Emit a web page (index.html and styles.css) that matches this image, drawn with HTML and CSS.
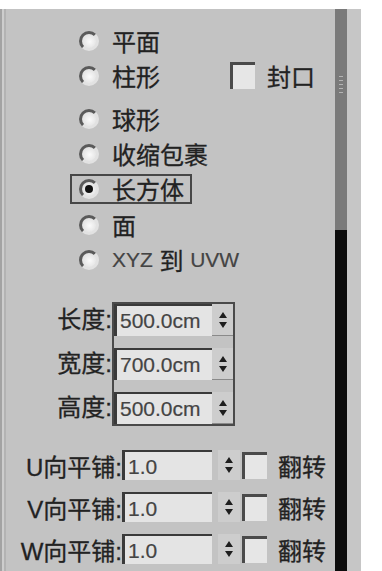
FILE: index.html
```html
<!DOCTYPE html>
<html lang="zh-CN">
<head>
    <meta charset="UTF-8">
    <title>UVW贴图参数</title>
    <link rel="stylesheet" href="styles.css">
</head>
<body>
<div class="panel">
    <div class="content">
        <!--mapping type-->
        <ul class="options">
            <li class="opt"><span class="radio"></span>平面</li>
            <li class="opt"><span class="radio"></span>柱形<span class="cap"><span class="check"></span>封口</span></li>
            <li class="opt gap_lg"><span class="radio"></span>球形</li>
            <li class="opt"><span class="radio"></span>收缩包裹</li>
            <li class="opt"><span class="picked"><span class="radio on"></span>长方体</span></li>
            <li class="opt gap_sm"><span class="radio"></span>面</li>
            <li class="opt"><span class="radio"></span><span class="latin">XYZ</span>&nbsp;到&nbsp;<span class="latin">UVW</span></li>
        </ul>
        <!--size-->
        <div class="dims">
            <div class="dim_labels">
                <span>长度:</span>
                <span>宽度:</span>
                <span>高度:</span>
            </div>
            <div class="dim_frame">
                <div class="spin"><span class="field">500.0cm</span><span class="arrows"><svg width="10" height="22" viewBox="0 0 10 22"><path d="M5 3L9 9H1Z M1 13H9L5 19Z" fill="#1e1e1e"/></svg></span></div>
                <div class="spin"><span class="field">700.0cm</span><span class="arrows"><svg width="10" height="22" viewBox="0 0 10 22"><path d="M5 3L9 9H1Z M1 13H9L5 19Z" fill="#1e1e1e"/></svg></span></div>
                <div class="spin"><span class="field">500.0cm</span><span class="arrows"><svg width="10" height="22" viewBox="0 0 10 22"><path d="M5 3L9 9H1Z M1 13H9L5 19Z" fill="#1e1e1e"/></svg></span></div>
            </div>
        </div>
        <!--tiling-->
        <div class="tiles">
            <div class="tile"><span class="tile_label">U向平铺:</span><span class="field">1.0</span><span class="arrows"><svg width="10" height="22" viewBox="0 0 10 22"><path d="M5 3L9 9H1Z M1 13H9L5 19Z" fill="#1e1e1e"/></svg></span><span class="check"></span>翻转</div>
            <div class="tile"><span class="tile_label">V向平铺:</span><span class="field">1.0</span><span class="arrows"><svg width="10" height="22" viewBox="0 0 10 22"><path d="M5 3L9 9H1Z M1 13H9L5 19Z" fill="#1e1e1e"/></svg></span><span class="check"></span>翻转</div>
            <div class="tile"><span class="tile_label">W向平铺:</span><span class="field">1.0</span><span class="arrows"><svg width="10" height="22" viewBox="0 0 10 22"><path d="M5 3L9 9H1Z M1 13H9L5 19Z" fill="#1e1e1e"/></svg></span><span class="check"></span>翻转</div>
        </div>
    </div>
    <div class="scrollbar">
        <div class="thumb"><span class="grip"></span></div>
        <div class="track"></div>
    </div>
    <div class="edge"></div>
</div>
</body>
</html>
```

FILE: styles.css
```css
/*base*/
body{margin:0;background:#fff;color:#222;font-family:"Liberation Sans","Noto Sans CJK SC",sans-serif;}
ul,li{margin:0;padding:0;list-style:none;}

/*panel*/
.panel{display:flex;width:361px;height:562px;margin-top:9px;background:#c3c3c3;}
.content{flex:1;border-left:2px solid #a3a3a3;box-shadow:inset 2px 0 0 #cdcdcd,inset 4px 0 0 #b3b3b3;padding-top:14px;font-size:24px;-webkit-text-stroke:0.3px #222;}
.scrollbar{width:12px;display:flex;flex-direction:column;}
.thumb{height:221px;background:#7a7a7a;}
.grip{display:block;width:4px;height:18px;margin:67px auto 0;background:repeating-linear-gradient(#b4b4b4 0 1px,transparent 1px 4px);}
.track{flex:1;background:#0c0c0c;}
.edge{width:14px;background:#c6c6c6;}

/*radio list*/
.options{padding-left:77px;}
.opt{display:flex;align-items:center;height:35px;}
.gap_lg{margin-top:8px;}
.gap_sm{margin-top:1px;}
.radio{flex:none;width:20px;height:20px;box-sizing:border-box;border-radius:50%;border:3px solid;border-color:#5a5a5a #e2e2e2 #e2e2e2 #5a5a5a;background:radial-gradient(circle at 55% 55%,#fafafa 0,#e0e0e0 75%);margin-right:13px;}
.radio.on{display:flex;align-items:center;justify-content:center;}
.radio.on:after{content:"";width:8px;height:8px;border-radius:50%;background:#111;}
.picked{display:flex;align-items:center;height:30px;box-sizing:border-box;border:2px solid #474747;margin-left:-9px;padding:0 6px 0 7px;}
.latin{font-size:21px;color:#444;-webkit-text-stroke:0.2px #444;}
.cap{display:flex;align-items:center;margin-left:70px;}
.check{flex:none;width:25px;height:27px;box-sizing:border-box;border-top:3px solid #4a4a4a;border-left:3px solid #4a4a4a;background:#e6e6e6;margin-right:12px;}

/*fields*/
.field{flex:none;box-sizing:border-box;height:100%;border-top:2px solid #3a3a3a;border-left:3px solid #3a3a3a;background:#e4e4e4;font-size:21px;line-height:29px;color:#444;-webkit-text-stroke:0.2px #444;padding-left:3px;}
.arrows{flex:none;display:flex;align-items:center;justify-content:center;background:#cdcdcd;}

.dims{display:flex;margin-top:25px;}
.dim_labels{width:110px;display:flex;flex-direction:column;align-items:flex-end;gap:12px;padding-top:2px;}
.dim_labels span{height:32px;line-height:32px;}
.dim_frame{display:flex;flex-direction:column;gap:12px;width:119px;border:2px solid #4a4a4a;}
.spin{display:flex;height:32px;}
.spin .field{width:98px;}
.spin .arrows{width:21px;border-bottom:1px solid #8a8a8a;}

.tiles{display:flex;flex-direction:column;gap:12px;margin-top:24px;}
.tile{display:flex;align-items:center;height:30px;}
.tile_label{width:120px;text-align:right;}
.tile .field{width:90px;}
.tile .arrows{width:22px;height:100%;margin-left:6px;}
.tile .check{margin-left:2px;margin-right:11px;}
```
